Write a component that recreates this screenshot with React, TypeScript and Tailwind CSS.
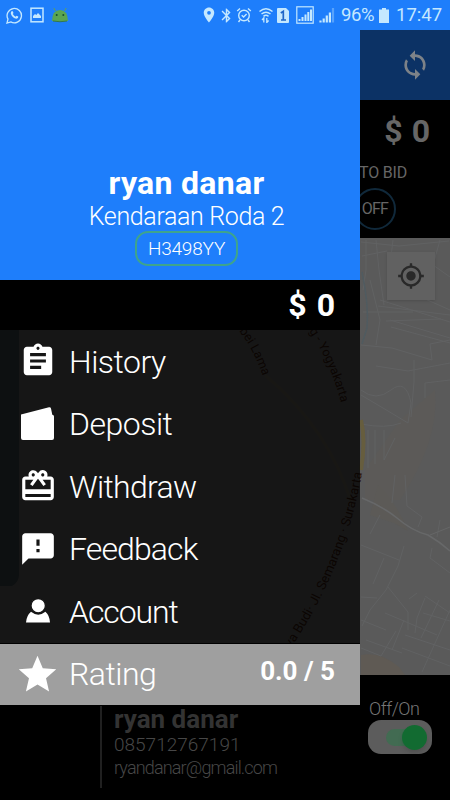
import type { ReactNode } from "react";
import {
  MdAssignment,
  MdBluetooth,
  MdCardGiftcard,
  MdFeedback,
  MdGpsFixed,
  MdPlace,
  MdStar,
  MdSync,
} from "react-icons/md";

function WalletIcon() {
  return (
    <svg viewBox="0 0 33 33" className="h-[33px] w-[33px] fill-white">
      <path d="M0 7.5 28 .3q1.6-.3 2 1.2l1.3 6.2q1.7 0 1.7 1.8V31q0 2-2 2H2q-2 0-2-2Z" />
    </svg>
  );
}

function PersonIcon() {
  return (
    <svg viewBox="0 0 24 24" className="h-6 w-6 overflow-visible fill-white">
      <path d="M5 12.800Q12.200 18.600 19.400 12.800 23.600 16.500 24 23.500H0q.6-7 5-10.700Z" />
      <circle cx="12.200" cy="6.700" r="7.200" stroke="#161616" strokeWidth="1.300" />
    </svg>
  );
}

function StatusBar() {
  return (
    <div className="absolute inset-x-0 top-0 z-20 flex h-[30px] items-center bg-[#1e7efb] pr-2 pl-[6px] text-[#c4e8ff]">
      <svg viewBox="0 0 18 18" className="h-[17px] w-[17px]" fill="none" stroke="currentColor">
        <path d="M1 17l1.100-4.200A7.600 7.600 0 1 1 5.100 15.800Z" strokeWidth="1.400" />
        <path d="M5.600 4.700q1.200-1 1.800.4l.5 1.200-.7 1.200q1 1.900 2.900 2.700l1-1 1.900.9q.3 1.800-1.900 2.300-4.300-.5-6-5.200-.1-1.500.5-2.500Z" fill="currentColor" stroke="none" />
      </svg>
      <svg viewBox="0 0 14 16" className="ml-[7px] h-4 w-[14px]" fill="none" stroke="currentColor">
        <rect x="1" y="1.200" width="12" height="13.600" strokeWidth="1.500" />
        <path d="M3 11V9l2-2 1.300 1L8 6l3 3v2Z" fill="currentColor" stroke="none" />
      </svg>
      <svg viewBox="0 0 18 16" className="ml-[7px] h-4 w-[18px]">
        <path d="M4.500 4 2.800 1M13.500 4l1.700-3" stroke="#5da05b" strokeWidth="1" />
        <path d="M1 14Q1.300 3 9 3t8 11Z" fill="#5aa552" />
        <path d="M2 14q7 1.500 14 0" stroke="#357a42" fill="none" />
        <circle cx="5.700" cy="8" r="1" fill="#174f2d" />
        <circle cx="12.300" cy="8" r="1" fill="#174f2d" />
      </svg>

      <MdPlace className="ml-auto h-[18px] w-[18px]" />
      <MdBluetooth className="h-[17px] w-[17px]" />
      <svg viewBox="0 0 16 16" className="ml-[1px] h-4 w-4" fill="none" stroke="currentColor" strokeWidth="1.400">
        <circle cx="8" cy="8.500" r="5.300" />
        <path d="M5.700 8.200 7.600 10l3-3M1.200 4 4 1.500M14.800 4 12 1.500M4 13l-1.500 2M12 13l1.500 2" />
      </svg>
      <svg viewBox="0 0 16 16" className="ml-[6px] h-4 w-4" fill="none" stroke="currentColor" strokeWidth="1.500">
        <path d="M1.500 4.500q6.500-5.500 13 0M3.500 7q4.500-3.500 9 0M5.500 9.300q2.500-2 5 0" />
        <path d="m4 13 1.800-2v4.500M8.800 11v4.500l1.800-2" strokeWidth="1.300" />
      </svg>
      <svg viewBox="0 0 12 15" className="ml-[3px] h-[15px] w-3">
        <path d="M1 0h8l3 3v11q0 1-1 1H1q-1 0-1-1V1q0-1 1-1Z" fill="currentColor" />
        <path d="M3.800 5 6.300 3.300V12M4 12h5" stroke="#1e66c8" strokeWidth="1.700" fill="none" />
      </svg>
      <svg viewBox="0 0 18 18" className="ml-[7px] h-[18px] w-[18px]">
        <rect x=".8" y=".8" width="16.400" height="16.400" fill="none" stroke="currentColor" strokeWidth="1.200" />
        <path d="M3.500 15v-2M6.500 15v-4M9.500 15V8.500M12.300 15V6M15 15V3.500" stroke="currentColor" strokeWidth="2" />
      </svg>
      <svg viewBox="0 0 16 16" className="ml-[5px] h-4 w-4" stroke="currentColor">
        <path d="M1.500 15.500v-2M4.700 15.500v-4M7.800 15.500V8.500" strokeWidth="2.200" />
        <path d="M14 15.500V1" strokeWidth="2.200" opacity=".35" />
        <path d="M10.900 15.500V5.500" strokeWidth="2.200" />
      </svg>
      <span className="ml-[6px] w-9 text-[18.500px] leading-none tracking-[-0.400px]">96%</span>
      <svg viewBox="0 0 10 15" className="ml-[2px] h-[15px] w-[10px] fill-current">
        <path d="M3 0h4v1.500h3V15H0V1.500h3Z" />
      </svg>
      <span className="ml-[7px] w-[46px] text-[18.500px] leading-none">17:47</span>
    </div>
  );
}

function CityMap() {
  return (
    <svg viewBox="0 238 450 437" className="block h-[437px] w-[450px] bg-[#5a5a5a]">
      <path d="M0 238H19V575Q19 582 12 586H0Z" fill="#364044" />
      <path d="M435 390Q440 440 400 500L365 500V470L400 420Z" fill="#5c5a58" />
      <path d="M361 655q20-4 38 12l6 8h-44Z" fill="#5f5a54" />
      <path d="M378 485q20 20 30 46l-14-8-24-8Z" fill="#5c5a57" />
      <g fill="none" stroke="#616263" strokeWidth="1">
        <path d="M361 242l38 4 50-5M362 256l25-5M370 280l10 40-4 25M380 300l70 22M390 320l60 18M391 327l59 16M378 306l72 9M405 290l45 20M361 345l31 3 40 12-2-16 20-4" />
        <path d="M414 360v22l-3 35M376 366l32 5 42-8M361 390q15 12 30 0t20 13l-3 20-20-12-27-16M361 424q25 5 40-1M368 430v38M375 430v34M384 430v30l11-22M425 398v-15l25-3" />
        <path d="M395 475l-3 28M405 475l2 31 15 11-4 10M380 515l-10 19M361 545l38 15M404 546l-6 20-12 24-16 20-8 16M384 558l-11 26M361 597l16 1M388 587l20 25v18M409 599l8-6M361 620l25 10M366 640l36 13M385 613l52 22M404 620l-12 30M361 648l20 8 15-25M432 548l-2 10 20 15M440 520l-3 17M425 598l-8 20-2 15M423 613l27 8M439 600l-18 38M450 610l-28 62M405 635l45 15M402 648l48 18M425 596l25 17" />
        <path d="M366 240v30l-3 20M376 240l3 30 5 35M393 240l-4 34M363 312h50M386 321l55-2M440 240l-7 25 17 12" />
      </g>
      <path d="M362 498q20 8 35 20 15 13 31 17 12 7 22 16" fill="none" stroke="#676869" strokeWidth="1.600" />
      <path d="M430 535l20-8" stroke="#656667" />
      <path d="M362 272q7 33 5 56l-5 16" fill="none" stroke="#505b60" strokeWidth="1.500" />
      <path d="M265 375Q330 430 352 505" fill="none" stroke="#625c4e" strokeWidth="3" opacity=".7" />
      <path d="M361 420q5 20 0 50" fill="none" stroke="#665d3e" strokeWidth="4" />
      <g fill="#2e150a" fontFamily="Roboto, sans-serif">
        <path id="road-a" d="M239 331Q255 351 264 380" fill="none" />
        <path id="road-b" d="M309 331Q331 362 343 410" fill="none" />
        <path id="road-c" d="M291 648Q350 560 364 460" fill="none" />
        <text fontSize="12.500"><textPath href="#road-a">bei Lama</textPath></text>
        <text fontSize="12.500"><textPath href="#road-b">g - Yogyakarta</textPath></text>
        <text fontSize="13"><textPath href="#road-c">va Budi· Jl. Semarang · Surakarta</textPath></text>
      </g>
    </svg>
  );
}

function MenuItem({ icon, label, labelClass = "tracking-[-0.500px]" }: { icon: ReactNode; label: string; labelClass?: string }) {
  return (
    <li className="flex h-[62.500px] items-center pl-[18px]">
      <span className="flex w-[39px] justify-center">{icon}</span>
      <span className={`ml-3 pt-[1px] text-[32px] leading-none font-light ${labelClass}`}>{label}</span>
    </li>
  );
}

function Drawer() {
  return (
    <aside className="absolute top-[30px] left-0 z-10 w-[360px] text-white">
      <div className="flex h-[250px] flex-col items-center bg-[#1e7efb] pt-[135px] pl-[13px]">
        <h1 className="text-[32px] leading-9 font-bold tracking-[0.300px]">ryan danar</h1>
        <p className="text-[25px] leading-8 font-light tracking-[-0.350px]">Kendaraan Roda 2</p>
        <div className="mt-[-2px] flex h-[35px] w-[103px] items-center justify-center rounded-[13px] border-2 border-[#3fa48b] text-[19px] leading-none font-light tracking-[-0.200px]">
          H3498YY
        </div>
      </div>
      <div className="flex h-[50px] items-center justify-end bg-black pr-[25px] text-[32px] leading-none font-bold">
        $<span className="ml-[10px]">0</span>
      </div>
      <ul className="border-b border-black bg-black/75">
        <MenuItem icon={<MdAssignment className="h-[38px] w-[38px]" />} label="History" />
        <MenuItem icon={<WalletIcon />} label="Deposit" />
        <MenuItem icon={<MdCardGiftcard className="h-[38px] w-[38px]" />} label="Withdraw" labelClass="tracking-[-0.700px]" />
        <MenuItem icon={<MdFeedback className="h-[38px] w-[38px]" />} label="Feedback" labelClass="tracking-[-0.900px]" />
        <MenuItem icon={<PersonIcon />} label="Account" labelClass="tracking-[-1.100px]" />
      </ul>
      <div className="flex h-[61.500px] items-center bg-[#9f9f9f] pr-[25px] pl-[15px]">
        <MdStar className="h-[45px] w-[45px]" />
        <span className="ml-[9px] text-[32px] leading-none font-light tracking-[-0.500px]">Rating</span>
        <span className="mt-[-6px] ml-auto text-[26px] leading-none font-bold">0.0 / 5</span>
      </div>
    </aside>
  );
}

export default function App() {
  return (
    <div className="relative h-[800px] w-[450px] overflow-hidden bg-black font-[Roboto,sans-serif] whitespace-nowrap">
      <StatusBar />
      <Drawer />

      {/* Home screen, dimmed while the drawer is open */}
      <div className="flex h-[100px] items-end justify-end bg-[#0c3265] pr-[19px] pb-[19px]">
        <MdSync className="h-8 w-8 text-[#7d8288]" />
      </div>
      <div className="flex h-[138px] flex-col items-end">
        <div className="flex pt-[15px] pr-[20px] text-[32px] leading-none font-bold text-[#666]">
          $<span className="ml-[9px]">0</span>
        </div>
        <div className="mt-[18px] mr-[43px] text-[16px] leading-4 tracking-[-0.200px] text-[#666]">AUTO BID</div>
        <div className="mt-[7px] mr-[54px] flex h-[42px] w-[42px] items-center justify-center rounded-full border-2 border-[#10293b] text-[16px] tracking-[-0.800px] text-[#666]">
          OFF
        </div>
      </div>
      <div className="relative">
        <CityMap />
        <div className="absolute top-[14px] right-[15px] flex h-12 w-12 items-center justify-center bg-[#616161] shadow-sm">
          <MdGpsFixed className="h-7 w-7 text-[#292929]" />
        </div>
      </div>
      <div className="flex h-[125px] text-[#474747]">
        <div className="mt-[31px] ml-[100px] h-[82px] w-[2px] bg-[#202020]" />
        <div className="ml-[12px] pt-[29px]">
          <p className="text-[26px] leading-[30px] font-bold text-[#333]">ryan danar</p>
          <p className="text-[19px] leading-[22px] font-light">085712767191</p>
          <p className="text-[18px] leading-[23px] font-light tracking-[-0.850px]">ryandanar@gmail.com</p>
        </div>
        <div className="mr-[18px] ml-auto w-[64px] pt-[24px]">
          <p className="pl-[1px] text-[18px] leading-[20px] font-light tracking-[-0.500px] text-[#777]">Off/On</p>
          <div className="mt-[1px] flex h-[34px] w-[64px] items-center rounded-[13px] bg-[#5c5c5c] pl-[18px]">
            <div className="h-[17px] w-7 rounded-full bg-[#426b52]" />
            <div className="ml-[-12px] h-[25px] w-[25px] shrink-0 rounded-full bg-[#126b31] shadow-md" />
          </div>
        </div>
      </div>
    </div>
  );
}
